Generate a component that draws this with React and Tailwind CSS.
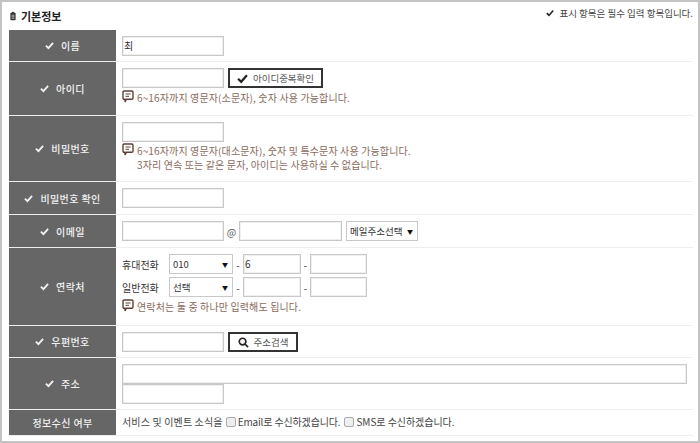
const KR = { fontFamily: '"Noto Sans CJK KR", "Noto Sans", sans-serif' };

function Check({ className = "w-[9px] h-[9px]" }) {
  return (
    <svg viewBox="0 0 10 10" className={className} fill="none" stroke="currentColor" strokeWidth="2">
      <path d="M1 5.2 L3.8 8 L9 2" />
    </svg>
  );
}

function Note({ children }) {
  return (
    <div className="flex items-start gap-[3px] text-[10px] leading-[14px] text-[#8a6a5c] tracking-[0.13px]">
      <svg viewBox="0 0 12 14" className="w-[12px] h-[14px] shrink-0 mt-[-1px]" fill="none" stroke="#5d4037" strokeWidth="1.4">
        <path d="M2.2 1 H9.8 Q11 1 11 2.2 V8 Q11 9.2 9.8 9.2 H4.5 L3 12 V9.2 H2.2 Q1 9.2 1 8 V2.2 Q1 1 2.2 1 Z" />
        <path d="M3.5 4 H8.5 M3.5 6.3 H7" strokeWidth="1" />
      </svg>
      <div>{children}</div>
    </div>
  );
}

function Input({ className = "w-[102px]", value }) {
  return (
    <div className={`h-[20px] border border-[#c8c8c8] shadow-[inset_0_0_0_1px_#efefef] bg-white text-[10px] leading-[18px] pl-[1px] text-[#333] shrink-0 ${className}`}>
      {value}
    </div>
  );
}

function Select({ className, label }) {
  return (
    <div className={`h-[20px] border border-[#c8c8c8] bg-white flex items-center justify-between text-[9.5px] whitespace-nowrap text-[#333] pl-[3px] pr-[4px] shrink-0 ${className}`}>
      <span>{label}</span>
      <span className="text-[6px] text-[#111]">▼</span>
    </div>
  );
}

function Button({ icon, children, className }) {
  return (
    <div className={`h-[20px] border-2 border-[#333] bg-white flex items-center justify-center gap-[5px] text-[9.5px] text-[#555] shrink-0 ${className}`}>
      {icon}
      <span>{children}</span>
    </div>
  );
}

function Row({ label, h, required = true, pt, children }) {
  return (
    <div className={`flex border-b border-[#eeeeee] ${h}`}>
      <div className="w-[107px] mr-[2px] shrink-0 bg-[#666666] text-[#f2f2f2] flex items-center justify-center gap-[7px] text-[10px] font-medium tracking-[0.4px]">
        {required && <Check />}
        <span>{label}</span>
      </div>
      <div className={`flex-1 pl-[4px] flex flex-col justify-start ${pt}`}>{children}</div>
    </div>
  );
}

export default function App() {
  return (
    <div style={KR} className="w-[700px] h-[443px] bg-white border-[2px] border-[#c4c4c4] pl-[7px] pr-[5px] overflow-hidden box-border">
      <div className="h-[28px] flex justify-between items-start">
        <div className="flex items-center gap-[5px] pt-[6px] text-[11px] font-bold text-[#222] leading-[16px]">
          <svg viewBox="0 0 8 11" className="w-[6px] h-[10px] ml-[1px]">
            <rect x="0.5" y="1" width="7" height="10" rx="1" fill="#333" />
            <rect x="2.5" y="0" width="3" height="2" fill="#333" />
            <path d="M2 4.5 H6 M2 6.5 H6 M2 8.5 H6" stroke="#fff" strokeWidth="0.8" />
          </svg>
          <span>기본정보</span>
        </div>
        <div className="flex items-center gap-[5px] pt-[3px] text-[9.5px] text-[#444] leading-[16px]">
          <Check className="w-[8px] h-[8px] text-[#222]" />
          <span>표시 항목은 필수 입력 항목입니다.</span>
        </div>
      </div>

      <Row label="이름" h="h-[32px]" pt="pt-[6px]">
        <Input value="최" />
      </Row>
      <Row label="아이디" h="h-[54px]" pt="pt-[6px]">
        <div className="flex gap-[4px]">
          <Input />
          <Button className="w-[95px]" icon={<Check className="w-[11px] h-[11px] text-[#222]" />}>아이디중복확인</Button>
        </div>
        <div className="mt-[3px]">
          <Note>6~16자까지 영문자(소문자), 숫자 사용 가능합니다.</Note>
        </div>
      </Row>
      <Row label="비밀번호" h="h-[66px]" pt="pt-[6px]">
        <Input />
        <div className="mt-[2px]">
          <Note>
            6~16자까지 영문자(대소문자), 숫자 및 특수문자 사용 가능합니다.
            <br />
            3자리 연속 또는 같은 문자, 아이디는 사용하실 수 없습니다.
          </Note>
        </div>
      </Row>
      <Row label="비밀번호 확인" h="h-[33px]" pt="pt-[6px]">
        <Input />
      </Row>
      <Row label="이메일" h="h-[33px]" pt="pt-[6px]">
        <div className="flex items-center">
          <Input />
          <span className="w-[15px] text-center text-[10px] text-[#555]">@</span>
          <Input className="w-[103px]" />
          <Select className="ml-[4px] w-[72px]" label="메일주소선택" />
        </div>
      </Row>
      <Row label="연락처" h="h-[78px]" pt="pt-[6px]">
        <div className="flex items-center text-[10px] text-[#333]">
          <span className="w-[47px]">휴대전화</span>
          <Select className="w-[64px]" label="010" />
          <span className="w-[10px] text-center">-</span>
          <Input className="w-[58px]" value="6" />
          <span className="w-[9px] text-center">-</span>
          <Input className="w-[57px]" />
        </div>
        <div className="flex items-center text-[10px] text-[#333] mt-[3px]">
          <span className="w-[47px]">일반전화</span>
          <Select className="w-[64px]" label="선택" />
          <span className="w-[10px] text-center">-</span>
          <Input className="w-[58px]" />
          <span className="w-[9px] text-center">-</span>
          <Input className="w-[57px]" />
        </div>
        <div className="mt-[3px]">
          <Note>연락처는 둘 중 하나만 입력해도 됩니다.</Note>
        </div>
      </Row>
      <Row label="우편번호" h="h-[32px]" pt="pt-[6px]">
        <div className="flex gap-[4px]">
          <Input />
          <Button className="w-[70px]" icon={
            <svg viewBox="0 0 12 12" className="w-[11px] h-[11px]" fill="none" stroke="#222" strokeWidth="1.8">
              <circle cx="5" cy="5" r="3.6" />
              <path d="M7.6 7.6 L11 11" />
            </svg>
          }>주소검색</Button>
        </div>
      </Row>
      <Row label="주소" h="h-[52px]" pt="pt-[6px]">
        <Input className="w-[565px]" />
        <Input />
      </Row>
      <Row label="정보수신 여부" h="h-[26px]" required={false} pt="pt-[3px]">
        <div className="flex items-center text-[10px] text-[#444] leading-[18px]">
          <span className="tracking-[0.15px]">서비스 및 이벤트 소식을</span>
          <span className="w-[10px] h-[10px] border border-[#aaa] rounded-[2px] bg-[#eee] ml-[3px] mr-[2px]" />
          <span className="tracking-[-0.15px]">Email로 수신하겠습니다.</span>
          <span className="w-[10px] h-[10px] border border-[#aaa] rounded-[2px] bg-[#eee] ml-[4px] mr-[2px]" />
          <span className="tracking-[-0.05px]">SMS로 수신하겠습니다.</span>
        </div>
      </Row>
    </div>
  );
}
